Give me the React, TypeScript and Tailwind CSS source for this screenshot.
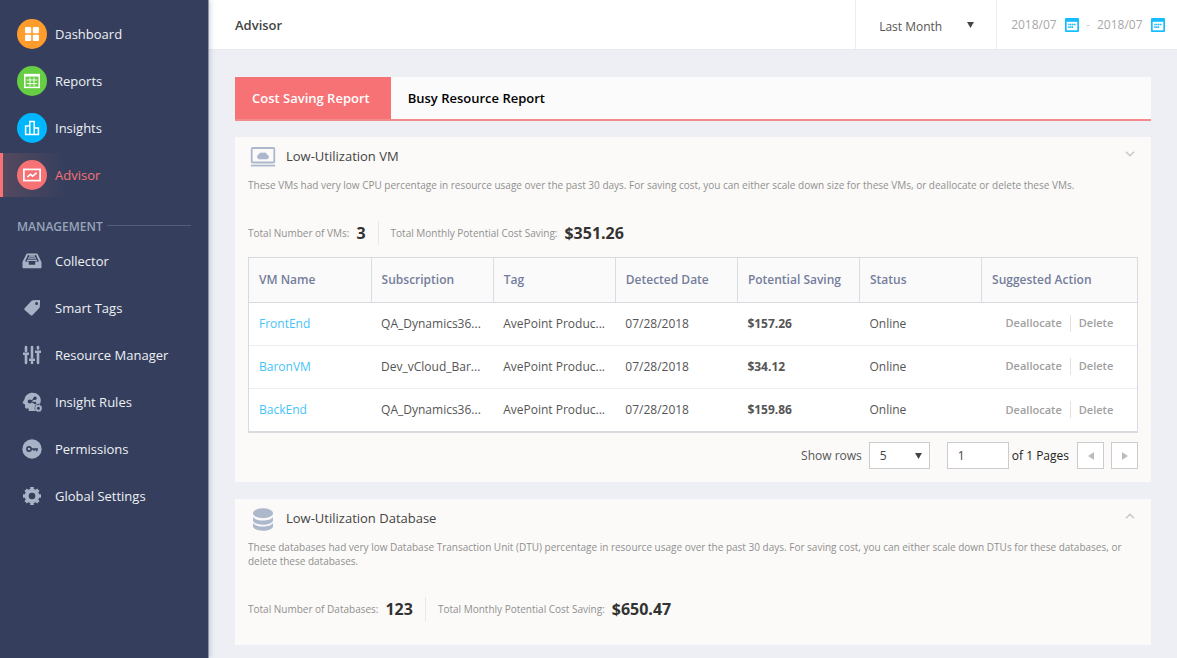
import { useState } from "react";
import type { ReactNode } from "react";

const mainNav = [
  {
    id: 1,
    label: "Dashboard",
    color: "bg-[#ff9c2b]",
    icon: (
      <svg viewBox="0 0 16 16" className="size-4" fill="#fff">
        <rect x="1" y="1" width="6.2" height="6.2" rx="1" />
        <rect x="8.8" y="1" width="6.2" height="6.2" rx="1" />
        <rect x="1" y="8.8" width="6.2" height="6.2" rx="1" />
        <rect x="8.8" y="8.8" width="6.2" height="6.2" rx="1" />
      </svg>
    ),
  },
  {
    id: 2,
    label: "Reports",
    color: "bg-[#67cd43]",
    icon: (
      <svg viewBox="0 0 16 16" className="size-4" fill="none" stroke="#fff">
        <rect x="0.8" y="1.6" width="14.4" height="12.8" strokeWidth="1.5" />
        <path d="M1 2.4h14" strokeWidth="2.4" />
        <path d="M2.8 7h10.4M2.8 10.6h10.4M6 4.5v8.5M10 4.5v8.5" strokeWidth="0.9" />
      </svg>
    ),
  },
  {
    id: 3,
    label: "Insights",
    color: "bg-[#00b7ff]",
    icon: (
      <svg viewBox="0 0 16 16" className="size-4" fill="none" stroke="#fff" strokeWidth="1.5">
        <path d="M1.6 14.5V6h4.2v8.5zM5.8 14.5V1.6h4.4v12.9zM10.2 14.5V8h4.2v6.5z" />
      </svg>
    ),
  },
  {
    id: 4,
    label: "Advisor",
    color: "bg-[#f77274]",
    icon: (
      <svg viewBox="0 0 18 14" className="h-3.5 w-[18px]" fill="none" stroke="#fff">
        <rect x="0.9" y="1.4" width="16.2" height="11.2" strokeWidth="1.7" />
        <path d="M4.4 9l3-2.6 2.2 1.8 4-3.4" strokeWidth="1.6" />
      </svg>
    ),
  },
];

const managementNav = [
  {
    id: 1,
    label: "Collector",
    icon: (
      <svg viewBox="0 0 20 20" className="size-5">
        <path
          fillRule="evenodd"
          d="M5.4 2.4h9.2c.5 0 .8.2 1 .6l3.6 7.6c.2.3.3.7.3 1v4.7c0 .6-.4 1-1 1h-17c-.6 0-1-.4-1-1v-4.7c0-.3.1-.7.2-1L4.400 3c.2-.4.5-.6 1-.6zM6 4 3 10.600h3.800v3.200h6.400v-3.200H17L14 4z"
        />
        <path d="M7 5h6M5.900 7.200h8.200M5 9.400h10" stroke="#a6b2c6" strokeWidth="1.300" />
      </svg>
    ),
  },
  {
    id: 2,
    label: "Smart Tags",
    icon: (
      <svg viewBox="0 0 20 20" className="size-5">
        <path
          fillRule="evenodd"
          d="M11 2.200l6-.3c.7 0 1.100.4 1.100 1l-.3 5.600c0 .5-.2 1-.5 1.400l-6.900 7.300c-.5.5-1.200.5-1.700.1l-6-5.400c-.5-.5-.5-1.200-.1-1.700l7-7.400c.4-.4.900-.6 1.400-.6zM14.600 4a1.500 1.500 0 1 0 0 3 1.500 1.500 0 0 0 0-3z"
        />
      </svg>
    ),
  },
  {
    id: 3,
    label: "Resource Manager",
    icon: (
      <svg viewBox="0 0 20 20" className="size-5" fill="none" stroke="#a6b2c6" strokeWidth="2.600">
        <path d="M4 2v4M4 10v8M10 2v10.500M10 17v1M16 2v1.500M16 8v10" strokeLinecap="round" />
        <path d="M1 8.700h6M7 14.800h6M13 6.700h6" />
      </svg>
    ),
  },
  {
    id: 4,
    label: "Insight Rules",
    icon: (
      <svg viewBox="0 0 20 20" className="size-5">
        <path d="M10.500.8c4.800 0 8.300 3.300 8.300 7.700 0 1.200-.3 2.300-.8 3.300-3-.6-5.500 1.300-5.500 4.300 0 1.200.4 2.200 1.100 3H6.700v-2.600H4.500c-1 0-1.500-.6-1.500-1.500v-2.600L.8 11.300C.5 11 .5 10.700.7 10.400L2.600 7C3.300 3.300 6.600.8 10.500.8z" />
        <path d="M13 6.500 8 9.600l5 1.300" stroke="#353f5d" strokeWidth="1.100" fill="none" />
        <circle cx="13" cy="6.200" r="1.700" fill="#353f5d" />
        <circle cx="7.700" cy="9.500" r="2" fill="#353f5d" />
        <circle cx="13" cy="11" r="1.300" fill="#353f5d" />
        <circle cx="16.400" cy="16.300" r="2.400" fill="none" stroke="#a6b2c6" strokeWidth="1.700" />
        <circle cx="16.400" cy="16.300" r="3.500" fill="none" stroke="#a6b2c6" strokeWidth="1" strokeDasharray="1.400 1.350" />
      </svg>
    ),
  },
  {
    id: 5,
    label: "Permissions",
    icon: (
      <svg viewBox="0 0 20 20" className="size-5">
        <circle cx="10" cy="10" r="9.700" />
        <g fill="none" stroke="#353f5d" strokeWidth="1.600">
          <circle cx="7" cy="10" r="2.100" />
          <path d="M9.200 10H16M14.600 10v2.300M12 10v1.800" />
        </g>
      </svg>
    ),
  },
  {
    id: 6,
    label: "Global Settings",
    icon: (
      <svg viewBox="0 0 20 20" className="size-5">
        <circle cx="10" cy="10" r="5.300" fill="none" stroke="#a6b2c6" strokeWidth="4" />
        <path
          fill="none"
          stroke="#a6b2c6"
          strokeWidth="3.600"
          d="M10 1v3M10 16v3M1 10h3M16 10h3M3.700 3.700l2 2M14.300 14.300l2 2M3.700 16.300l2-2M14.300 5.700l2-2"
        />
      </svg>
    ),
  },
];

const columns = ["VM Name", "Subscription", "Tag", "Detected Date", "Potential Saving", "Status"];

const vms = [
  { name: "FrontEnd", subscription: "QA_Dynamics36...", tag: "AvePoint Produc...", date: "07/28/2018", saving: "$157.26", status: "Online" },
  { name: "BaronVM", subscription: "Dev_vCloud_Bar...", tag: "AvePoint Produc...", date: "07/28/2018", saving: "$34.12", status: "Online" },
  { name: "BackEnd", subscription: "QA_Dynamics36...", tag: "AvePoint Produc...", date: "07/28/2018", saving: "$159.86", status: "Online" },
];

const Caret = ({ className = "" }: { className?: string }) => (
  <svg viewBox="0 0 8 7" className={`pointer-events-none h-[6px] w-[7px] ${className}`} fill="#444">
    <path d="M0 0h8L4 7z" />
  </svg>
);

const MonthField = ({ label }: { label: string }) => (
  <div className="flex items-center gap-2">
    <input
      aria-label={label}
      defaultValue="2018/07"
      className="w-[46px] bg-transparent text-[12px] text-[#a8a8a8] outline-none"
    />
    <button aria-label={`Pick ${label}`}>
      <svg viewBox="0 0 14 14" className="size-3.5">
        <rect width="14" height="14" rx="1" fill="#15bdff" />
        <rect x="1.700" y="3.800" width="10.600" height="8.500" fill="#fff" />
        <path d="M3.200 6.500h7.700M3.200 9.100h4.900" stroke="#15bdff" strokeWidth="1.700" strokeDasharray="1.500 .4" />
      </svg>
    </button>
  </div>
);

const Sidebar = () => (
  <aside className="z-10 w-[209px] shrink-0 border-r border-[#8d93a8] bg-[#353f5d] pt-3 shadow-[1px_0_5px_rgba(60,70,100,0.25)]">
    <nav className="flex flex-col gap-[3px]">
      {mainNav.map((item) => (
        <a
          key={item.id}
          href="#"
          className={`flex h-11 items-center border-l-3 pl-3.5 text-[13px] ${
            item.label === "Advisor"
              ? "border-[#f77274] bg-linear-to-r from-[#54495f] to-[#353f5d] to-30% text-[#f77274]"
              : "border-transparent text-[#eef0f4]"
          }`}
        >
          <span className={`flex size-[30px] items-center justify-center rounded-full ${item.color}`}>
            {item.icon}
          </span>
          <span className="pt-0.5 pl-2">{item.label}</span>
        </a>
      ))}
    </nav>

    <div className="mt-5 flex items-center gap-1 px-[17px]">
      <h2 className="text-[12px] leading-5 font-semibold text-[#98a4b9]">MANAGEMENT</h2>
      <span className="mb-1 h-px flex-1 bg-[#525e7a]" />
    </div>

    <nav className="mt-0.5 flex flex-col gap-[3px]">
      {managementNav.map((item) => (
        <a key={item.id} href="#" className="flex h-11 items-center pl-[22px] text-[13px] text-[#eef0f4]">
          <span className="fill-[#a6b2c6]">{item.icon}</span>
          <span className="pt-0.5 pl-[13px]">{item.label}</span>
        </a>
      ))}
    </nav>
  </aside>
);

const Header = () => (
  <header className="flex h-[49px] items-center bg-white pl-[26px] shadow-[0_1px_1px_#e9eaf0]">
    <h1 className="flex-1 pt-0.5 text-[13px] font-semibold text-[#444]">Advisor</h1>
    <div className="relative flex h-full w-[142px] items-center border-x border-[#ebedf2]">
      <select
        aria-label="Period"
        className="h-full w-full appearance-none bg-transparent pt-1 pl-[23px] text-[12px] text-[#555] outline-none"
      >
        <option>Last Month</option>
      </select>
      <Caret className="absolute right-[22px]" />
    </div>
    <div className="flex items-center gap-[7px] pr-3 pl-3.5">
      <MonthField label="start month" />
      <span className="text-[12px] text-[#ccc]">-</span>
      <MonthField label="end month" />
    </div>
  </header>
);

type PanelProps = {
  title: string;
  icon: ReactNode;
  description: string;
  countLabel: string;
  count: string;
  saving: string;
  open: boolean;
  children?: ReactNode;
};

const Panel = ({ title, icon, description, countLabel, count, saving, open, children }: PanelProps) => (
  <section className="bg-[#fbfaf8] px-[13px] pb-3">
    <div className="flex h-10 items-center">
      <span className="flex w-[30px] justify-center">{icon}</span>
      <h2 className="ml-2 flex-1 text-[13px] text-[#444]">{title}</h2>
      <button aria-label={`Toggle ${title}`} className="mr-[3px] mb-1.5">
        <svg viewBox="0 0 10 6" className="h-1.5 w-2.5" fill="none" stroke="#c8c8c8" strokeWidth="1.500">
          <path d={open ? "M1 .8l4 4 4-4" : "M1 5.200l4-4 4 4"} />
        </svg>
      </button>
    </div>
    <p className="mt-px text-[10px] leading-[14px] text-[#909090]">{description}</p>
    <div className="mt-[29px] mb-3 flex h-6 items-center text-[10px] text-[#909090]">
      <span>{countLabel}</span>
      <strong className="ml-[7px] text-[16px] font-bold text-[#333]">{count}</strong>
      <span className="mx-3 h-6 w-px bg-[#e8e8e8]" />
      <span>Total Monthly Potential Cost Saving:</span>
      <strong className="ml-[7px] text-[16px] font-bold text-[#333]">{saving}</strong>
    </div>
    {children}
  </section>
);

const VmTable = () => (
  <div className="border border-b-2 border-[#d8dae0]">
    <table className="w-full table-fixed border-collapse text-left text-[12px]">
      <thead>
        <tr className="h-11 border-b border-[#d8dae0] bg-[#fafafa] text-[#757d9c]">
          {columns.map((col) => (
            <th key={col} className="w-[13.75%] border-r border-[#d8dce3] pl-2.5 font-semibold whitespace-nowrap">
              {col}
            </th>
          ))}
          <th className="pl-2.5 font-semibold">Suggested Action</th>
        </tr>
      </thead>
      <tbody className="bg-white text-[#555]">
        {vms.map((vm) => (
          <tr key={vm.name} className="h-[43px] border-b border-[#ecedf3] last:border-b-0">
            <td className="pl-2.5">
              <a href="#" className="text-[#45c3f8]">{vm.name}</a>
            </td>
            <td className="pl-2.5 whitespace-nowrap">{vm.subscription}</td>
            <td className="pl-2.5 whitespace-nowrap">{vm.tag}</td>
            <td className="pl-2.5">{vm.date}</td>
            <td className="pl-2.5 font-bold">{vm.saving}</td>
            <td className="pl-2.5">{vm.status}</td>
            <td className="pl-6">
              <div className="flex items-center text-[11px] font-semibold text-[#a0a0a0]">
                <button>Deallocate</button>
                <span className="mx-2 h-[17px] w-px bg-[#e2e2e2]" />
                <button>Delete</button>
              </div>
            </td>
          </tr>
        ))}
      </tbody>
    </table>
  </div>
);

const Pagination = () => (
  <div className="mt-[9px] mb-px flex items-center justify-end text-[12px] text-[#555]">
    <label htmlFor="rows">Show rows</label>
    <div className="relative ml-[7px] flex items-center">
      <select
        id="rows"
        className="h-[27px] w-[61px] appearance-none border border-[#ccc] bg-white pl-2.5 text-[#444] outline-none"
      >
        <option>5</option>
      </select>
      <Caret className="absolute right-2" />
    </div>
    <input
      id="page"
      defaultValue="1"
      className="ml-[17px] h-[27px] w-[62px] border border-[#ccc] bg-white pl-2.5 text-[#444] outline-none"
    />
    <label htmlFor="page" className="ml-[3px] text-[#222]">of 1 Pages</label>
    <button aria-label="Previous page" className="ml-2 flex h-[27px] w-[27px] items-center justify-center border border-[#ccc] bg-white">
      <svg viewBox="0 0 6 8" className="h-2 w-1.5" fill="#bbb">
        <path d="M6 0v8L0 4z" />
      </svg>
    </button>
    <button aria-label="Next page" className="ml-[7px] flex h-[27px] w-[27px] items-center justify-center border border-[#ccc] bg-white">
      <svg viewBox="0 0 6 8" className="h-2 w-1.5" fill="#bbb">
        <path d="M0 0v8l6-4z" />
      </svg>
    </button>
  </div>
);

const App = () => {
  const [tab, setTab] = useState("Cost Saving Report");

  return (
    <div className="flex min-h-screen bg-[#eeeff5] font-['Open_Sans',sans-serif]">
      <Sidebar />
      <div className="min-w-0 flex-1">
        <Header />
        <main className="px-[26px] pt-7 pb-3">
          {/* Tabs */}
          <div className="flex border-b-2 border-[#f58a8b] bg-[#fbfbfb]">
            {["Cost Saving Report", "Busy Resource Report"].map((name) => (
              <button
                key={name}
                onClick={() => setTab(name)}
                className={`h-[42px] pt-0.5 pr-[21px] pl-[17px] text-[13px] font-semibold ${
                  tab === name ? "bg-[#f77274] text-white" : "text-black"
                }`}
              >
                {name}
              </button>
            ))}
          </div>

          {/* Panels */}
          <div className="mt-4 flex flex-col gap-[17px]">
            <Panel
              title="Low-Utilization VM"
              icon={
                <svg viewBox="0 0 26 20" className="h-5 w-[26px]">
                  <rect x="1.700" y="1" width="22.600" height="14.500" rx="1" fill="none" stroke="#adb8cc" strokeWidth="1.800" />
                  <path d="M.8 18.600h24.400" stroke="#adb8cc" strokeWidth="1.800" />
                  <path d="M9 12.200a2.500 2.500 0 0 1-.5-4.700 3 3 0 0 1 4.300-1.700 3.300 3.300 0 0 1 4.400 1.900 2.300 2.300 0 0 1-.2 4.500z" fill="#adb8cc" />
                </svg>
              }
              description="These VMs had very low CPU percentage in resource usage over the past 30 days. For saving cost, you can either scale down size for these VMs, or deallocate or delete these VMs."
              countLabel="Total Number of VMs:"
              count="3"
              saving="$351.26"
              open
            >
              <VmTable />
              <Pagination />
            </Panel>

            <Panel
              title="Low-Utilization Database"
              icon={
                <svg viewBox="0 0 20 23" className="h-[23px] w-5" fill="#adb8cc">
                  <ellipse cx="10" cy="5.300" rx="10" ry="5" />
                  <path d="M0 9c1.500 2.400 5.400 3.600 10 3.600S18.500 11.400 20 9v3.200c0 2.500-4.500 4.500-10 4.500S0 14.700 0 12.200z" />
                  <path d="M0 15c1.500 2.400 5.400 3.600 10 3.600s8.500-1.200 10-3.600v3.200c0 2.500-4.500 4.500-10 4.500S0 20.700 0 18.200z" />
                </svg>
              }
              description="These databases had very low Database Transaction Unit (DTU) percentage in resource usage over the past 30 days. For saving cost, you can either scale down DTUs for these databases, or delete these databases."
              countLabel="Total Number of Databases:"
              count="123"
              saving="$650.47"
              open={false}
            />
          </div>
        </main>
      </div>
    </div>
  );
};

export default App;
